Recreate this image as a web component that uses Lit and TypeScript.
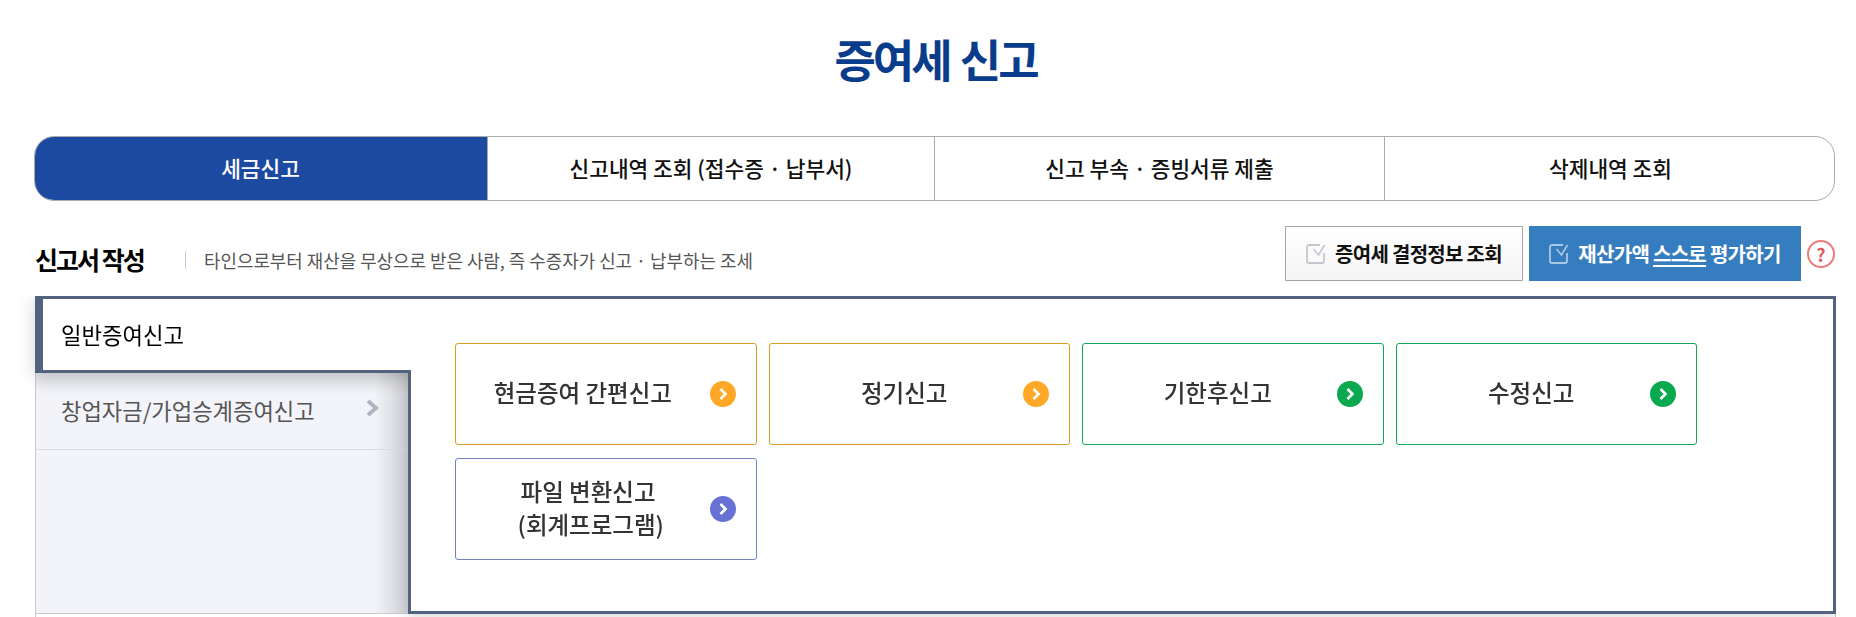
import { LitElement, css, html, svg } from 'lit'
import { customElement } from 'lit/decorators.js'

const tabs = [
  { label: '세금신고', active: true },
  { label: '신고내역 조회 (접수증 · 납부서)' },
  { label: '신고 부속 · 증빙서류 제출' },
  { label: '삭제내역 조회' },
]

// trailing nbsp: the source lines sit a little left of centre
const cards = [
  { lines: ['현금증여 간편신고\u00a0\u00a0\u00a0'], tone: 'orange' },
  { lines: ['정기신고'], tone: 'orange' },
  { lines: ['기한후신고'], tone: 'green' },
  { lines: ['수정신고'], tone: 'green' },
  { lines: ['파일 변환신고\u00a0', '(회계프로그램)'], tone: 'blue' },
]

const checkIcon = svg`
  <path d="M14 1H3a2 2 0 0 0-2 2v14a2 2 0 0 0 2 2h13a2 2 0 0 0 2-2V9" fill="none" stroke="currentColor" stroke-width="1.800"/>
  <path d="M7.500 5l5 6L18.500 1" fill="none" stroke="currentColor" stroke-width="1.600"/>`

@customElement('app-root')
export class AppRoot extends LitElement {
  static styles = css`
    :host {
      display: block;
      height: 617px;
      overflow: hidden;
      padding: 0 20px 0 35px;
      background: #fff;
      font-family: "Noto Sans CJK KR", "Noto Sans", sans-serif;
    }
    * { box-sizing: border-box; }

    h1 {
      margin: 0;
      height: 136px;
      padding-top: 27px;
      text-align: center;
      font-size: 45px;
      line-height: 64px;
      font-weight: 700;
      letter-spacing: -3px;
      word-spacing: 3px;
      color: #0a3c8c;
    }

    .tabs {
      display: grid;
      grid-template-columns: 452px 447px 450px 452px;
      height: 65px;
      margin: 0 1px 0 -1px;
      border: 1px solid #aaa;
      border-radius: 20px;
      overflow: hidden;
    }
    .tab {
      display: flex;
      align-items: center;
      justify-content: center;
      padding-bottom: 2px;
      border-left: 1px solid #aaa;
      font-size: 21.400px;
      font-weight: 500;
      color: #111;
    }
    .tab.active {
      margin: -1px 0 -1px -1px;
      border: 0;
      background: #1c4aa1;
      color: #fff;
    }

    .head {
      display: flex;
      align-items: center;
      height: 55px;
      margin: 25px 0 15px;
    }
    h2 {
      margin: 10px 0 0;
      width: 150px;
      font-size: 25px;
      line-height: 30px;
      font-weight: 700;
      letter-spacing: -2px;
      color: #000;
    }
    .desc {
      flex: 1;
      margin-top: 12px;
      padding-left: 19px;
      font-size: 17.900px;
      line-height: 24px;
      color: #555;
      background: linear-gradient(#ccc, #ccc) 0 50% / 1px 18px no-repeat;
    }
    .btn {
      display: flex;
      align-items: center;
      justify-content: center;
      gap: 9px;
      height: 55px;
      font-size: 20px;
      font-weight: 700;
      letter-spacing: -0.700px;
    }
    .btn svg { flex: none; width: 20px; height: 20px; }
    .btn.plain {
      width: 238px;
      border: 1px solid #a5a5a5;
      background: linear-gradient(#fff, #f5f5f5);
      color: #111;
    }
    .btn.plain svg { color: #c3c7cf; }
    .btn.primary {
      width: 272px;
      margin-left: 6px;
      background: #357dbf;
      color: #fff;
    }
    .btn.primary svg { color: #a9c8e4; }
    .btn u { text-underline-offset: 3px; }
    .help {
      display: flex;
      align-items: center;
      justify-content: center;
      width: 28px;
      height: 28px;
      margin: 0 1px 0 6px;
      border: 2px solid #ee7a7a;
      border-radius: 50%;
      font-size: 18px;
      font-weight: 700;
      line-height: 1;
      color: #e05a5a;
    }

    .panel {
      position: relative;
      height: 321px;
      padding-bottom: 3px;
      border-left: 1px solid #c9cad0;
      border-right: 1px solid #c9cad0;
      clip-path: inset(0 0 0 -20px);
    }
    .side {
      width: 372px;
      height: 100%;
      padding-top: 77px;
      border-bottom: 1px solid #c9cad0;
      background:
        linear-gradient(to left, rgba(0, 0, 0, 0.14), transparent 34px),
        linear-gradient(rgba(0, 0, 0, 0.08), transparent 22px) 0 77px no-repeat,
        #f3f4f9;
    }
    .side-item {
      display: flex;
      align-items: center;
      justify-content: space-between;
      height: 77px;
      padding: 0 28px 2px 25px;
      border-bottom: 1px solid #dcdde2;
      font-size: 22.200px;
      color: #555;
    }
    .side-item svg { width: 14px; height: 18px; margin-top: -4px; }

    .front {
      position: absolute;
      top: 0;
      left: -1px;
      right: -1px;
      height: 318px;
      display: flex;
      align-items: flex-start;
      filter: drop-shadow(0 3px 9px rgba(0, 0, 0, 0.17));
    }
    .side-active {
      position: relative;
      z-index: 1;
      flex: none;
      display: flex;
      align-items: center;
      width: 376px;
      height: 77px;
      margin-right: -3px;
      padding: 0 0 2px 18px;
      border: solid #53627f;
      border-width: 3px 0 3px 8px;
      background: #fff;
      font-size: 22.300px;
      color: #000;
    }
    .content {
      flex: 1;
      display: flex;
      flex-wrap: wrap;
      align-content: flex-start;
      gap: 13px 12px;
      height: 318px;
      padding: 44px 0 0 44px;
      border: 3px solid #53627f;
      background: #fff;
    }
    .card {
      display: flex;
      align-items: center;
      width: 301.500px;
      height: 102px;
      padding-right: 20px;
      border: 1px solid;
      border-radius: 3px;
      font-size: 23.500px;
      font-weight: 500;
      line-height: 33px;
      color: #333;
    }
    .card span {
      flex: 1;
      margin: -3px -1px 0 0;
      text-align: center;
    }
    .card svg { flex: none; width: 26px; height: 26px; margin-left: -15px; }
    .orange { border-color: #d99e1e; }
    .orange svg { color: #ffa726; }
    .green { border-color: #0fa958; }
    .green svg { color: #0aa84f; }
    .blue { border-color: #7283c0; }
    .blue svg { color: #6872d4; }
  `

  renderTabs() {
    return tabs.map(t => html`<div class="tab ${t.active ? 'active' : ''}">${t.label}</div>`)
  }

  renderCard(card: { lines: string[]; tone: string }) {
    return html`
      <div class="card ${card.tone}">
        <span>${card.lines.map((l, i) => html`${i ? html`<br />` : ''}${l}`)}</span>
        <svg viewBox="0 0 26 26">
          <circle cx="13" cy="13" r="13" fill="currentColor" />
          <path d="M10.500 8l5 5-5 5" fill="none" stroke="#fff" stroke-width="2.600" />
        </svg>
      </div>
    `
  }

  render() {
    return html`
      <h1>증여세 신고</h1>
      <div class="tabs">${this.renderTabs()}</div>

      <div class="head">
        <h2>신고서 작성</h2>
        <div class="desc">타인으로부터 재산을 무상으로 받은 사람, 즉 수증자가 신고 · 납부하는 조세</div>
        <div class="btn plain"><svg viewBox="0 0 20 20">${checkIcon}</svg>증여세 결정정보 조회</div>
        <div class="btn primary"><svg viewBox="0 0 20 20">${checkIcon}</svg><span>재산가액 <u>스스로</u> 평가하기</span></div>
        <div class="help">?</div>
      </div>

      <div class="panel">
        <div class="side">
          <div class="side-item">
            창업자금/가업승계증여신고
            <svg viewBox="0 0 14 18"><path d="M2 2l8 7-8 7" fill="none" stroke="#b0b3c0" stroke-width="4" /></svg>
          </div>
        </div>
        <div class="front">
          <div class="side-active">일반증여신고</div>
          <div class="content">${cards.map(c => this.renderCard(c))}</div>
        </div>
      </div>
    `
  }
}
